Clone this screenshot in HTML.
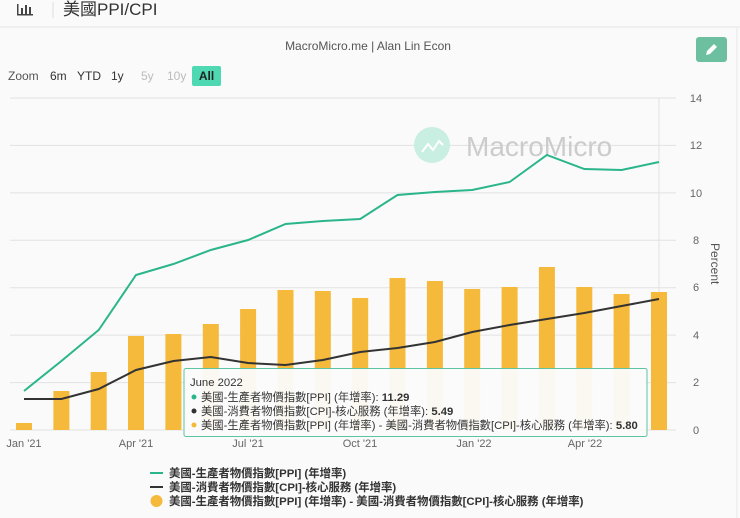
<!DOCTYPE html>
<html><head><meta charset="utf-8"><style>
body{margin:0;width:740px;height:518px;overflow:hidden;background:#fafafa;font-family:"Liberation Sans","Noto Sans CJK TC",sans-serif;}
</style></head><body>
<svg width="740" height="518" xmlns="http://www.w3.org/2000/svg" style="position:absolute;left:0;top:0;font-family:'Liberation Sans','Noto Sans CJK TC',sans-serif">
<rect x="0" y="0" width="740" height="26" fill="#fafafa"/>
<line x1="0" y1="27" x2="740" y2="27" stroke="#e4e4e4"/>
<g fill="#444"><rect x="17" y="4" width="1.5" height="11"/><rect x="17" y="14" width="16" height="1.5"/><rect x="21" y="8" width="2" height="6"/><rect x="25" y="5" width="2" height="9"/><rect x="29" y="7" width="2" height="7"/></g>
<line x1="53" y1="2" x2="53" y2="18" stroke="#ddd"/>
<text x="63" y="15" font-size="17" fill="#333">美國PPI/CPI</text>
<line x1="737" y1="28" x2="737" y2="518" stroke="#e8e8e8"/>
<text x="368" y="50" font-size="12" fill="#555" text-anchor="middle">MacroMicro.me | Alan Lin Econ</text>
<rect x="696" y="37" width="31" height="25" rx="3" fill="#6cbf9f"/>
<path d="M706 55 l1-4 7-7 3 3-7 7z" fill="#fff"/>
<g font-size="12" fill="#333">
<text x="8" y="80" fill="#555">Zoom</text><text x="50" y="80">6m</text><text x="77" y="80">YTD</text><text x="111" y="80">1y</text>
<text x="141" y="80" fill="#bbb">5y</text><text x="167" y="80" fill="#bbb">10y</text></g>
<rect x="192" y="66" width="29" height="20" rx="2" fill="#4fd9b3"/>
<text x="206.5" y="80" font-size="12" font-weight="bold" fill="#222" text-anchor="middle">All</text>
<g stroke="#e2e2e2" stroke-width="1">
<line x1="10" y1="98" x2="676" y2="98"/><line x1="10" y1="145.4" x2="676" y2="145.4"/><line x1="10" y1="192.9" x2="676" y2="192.9"/>
<line x1="10" y1="240.3" x2="676" y2="240.3"/><line x1="10" y1="287.7" x2="676" y2="287.7"/><line x1="10" y1="335.1" x2="676" y2="335.1"/>
<line x1="10" y1="382.6" x2="676" y2="382.6"/><line x1="10" y1="430" x2="676" y2="430"/>
<line x1="659" y1="98" x2="659" y2="430"/>
</g>
<g font-size="11" fill="#666" text-anchor="middle">
<text x="696" y="102">14</text><text x="696" y="149">12</text><text x="696" y="197">10</text><text x="696" y="244">8</text>
<text x="696" y="291">6</text><text x="696" y="339">4</text><text x="696" y="386">2</text><text x="696" y="434">0</text>
</g>
<text transform="translate(711,243) rotate(90)" font-size="12" fill="#555">Percent</text>
<circle cx="432" cy="145" r="18" fill="#c8efe2"/>
<path d="M422 152 l6-8 5 6 6-9 4 4" stroke="#fff" stroke-width="2" fill="none"/>
<text x="466" y="156" font-size="28" fill="#ccc">MacroMicro</text>
<g fill="#f5b93b">
<rect x="16" y="423" width="16" height="7"/><rect x="53.4" y="391" width="16" height="39"/><rect x="90.7" y="372" width="16" height="58"/>
<rect x="128" y="336" width="16" height="94"/><rect x="165.4" y="334" width="16" height="96"/><rect x="202.8" y="324" width="16" height="106"/>
<rect x="240.1" y="309" width="16" height="121"/><rect x="277.5" y="290" width="16" height="140"/><rect x="314.8" y="291" width="16" height="139"/>
<rect x="352.2" y="298" width="16" height="132"/><rect x="389.5" y="278" width="16" height="152"/><rect x="426.9" y="281" width="16" height="149"/>
<rect x="464.2" y="289" width="16" height="141"/><rect x="501.6" y="287" width="16" height="143"/><rect x="538.9" y="267" width="16" height="163"/>
<rect x="576.3" y="287" width="16" height="143"/><rect x="613.6" y="294" width="16" height="136"/><rect x="651" y="292" width="16" height="138"/>
</g>
<polyline fill="none" stroke="#2bb58a" stroke-width="2" points="24,391 61.4,361 98.7,330 136,275 173.4,264 210.8,250 248.1,240 285.5,224 322.8,221 360.2,219 397.5,195 434.9,192 472.2,190 509.6,182 546.9,155 584.3,169 621.6,170 659,162"/>
<polyline fill="none" stroke="#333" stroke-width="2" points="24,399 61.4,399 98.7,389 136,370 173.4,361 210.8,357 248.1,363 285.5,365 322.8,360 360.2,352 397.5,348 434.9,342 472.2,332 509.6,325 546.9,319 584.3,313 621.6,306 659,299"/>
<g font-size="11" fill="#666" text-anchor="middle">
<text x="24" y="447">Jan '21</text><text x="136" y="447">Apr '21</text><text x="248" y="447">Jul '21</text>
<text x="360" y="447">Oct '21</text><text x="474" y="447">Jan '22</text><text x="585" y="447">Apr '22</text>
</g>
<rect x="184" y="368.5" width="463" height="68" rx="2" fill="#fbfbfb" fill-opacity="0.95" stroke="#5cc4a2"/>
<g font-size="11.3" fill="#333">
<text x="190" y="386">June 2022</text>
<circle cx="194" cy="397" r="2.5" fill="#2bb58a"/><text x="201" y="401">美國-生產者物價指數[PPI] (年增率): <tspan font-weight="bold">11.29</tspan></text>
<circle cx="194" cy="411" r="2.5" fill="#333"/><text x="201" y="415">美國-消費者物價指數[CPI]-核心服務 (年增率): <tspan font-weight="bold">5.49</tspan></text>
<circle cx="194" cy="425" r="2.5" fill="#f5b93b"/><text x="201" y="429">美國-生產者物價指數[PPI] (年增率) - 美國-消費者物價指數[CPI]-核心服務 (年增率): <tspan font-weight="bold">5.80</tspan></text>
</g>
<line x1="150" y1="473" x2="163" y2="473" stroke="#2bb58a" stroke-width="2"/>
<line x1="150" y1="487" x2="163" y2="487" stroke="#333" stroke-width="2"/>
<circle cx="156.5" cy="501" r="6" fill="#f5b93b"/>
<g font-size="11.4" font-weight="bold" fill="#333">
<text x="169" y="477">美國-生產者物價指數[PPI] (年增率)</text>
<text x="169" y="491">美國-消費者物價指數[CPI]-核心服務 (年增率)</text>
<text x="169" y="505">美國-生產者物價指數[PPI] (年增率) - 美國-消費者物價指數[CPI]-核心服務 (年增率)</text>
</g>
</svg>
</body></html>
